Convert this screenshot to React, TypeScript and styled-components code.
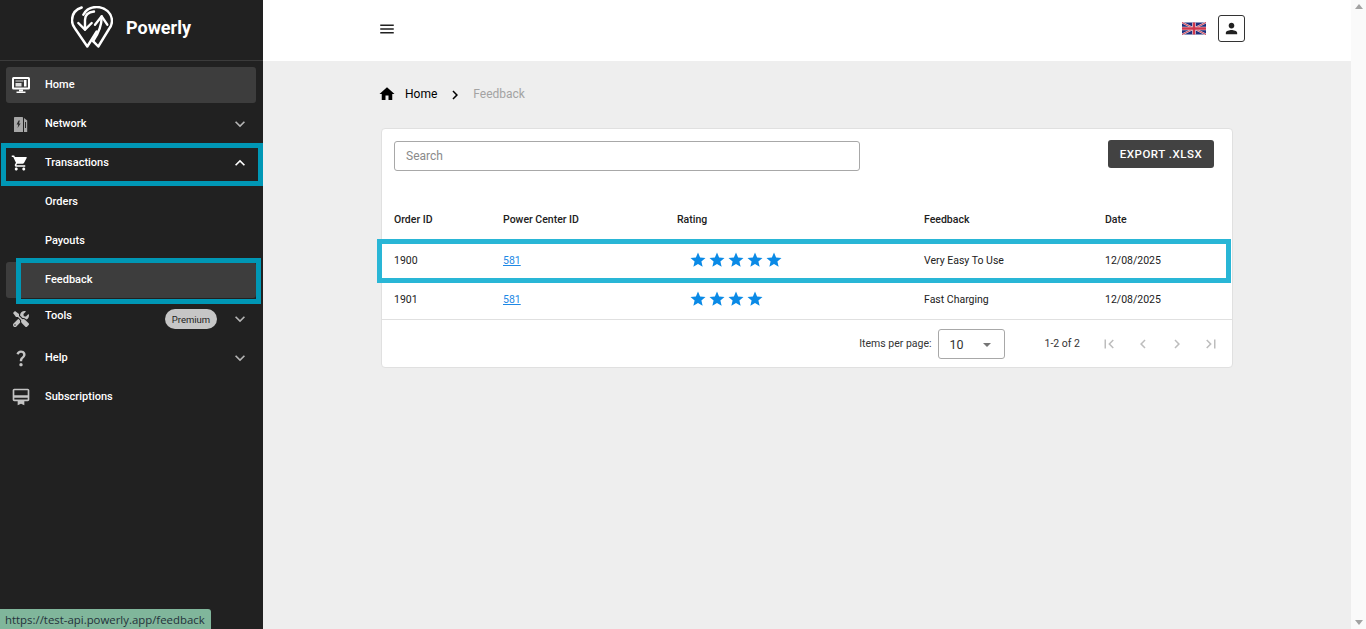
import { ReactNode } from "react";
import styled, { createGlobalStyle } from "styled-components";
import { FaTools } from "react-icons/fa";
import {
  MdCardMembership,
  MdChevronLeft,
  MdChevronRight,
  MdExpandLess,
  MdExpandMore,
  MdFirstPage,
  MdHome,
  MdLastPage,
  MdMenu,
  MdPerson,
  MdQuestionMark,
  MdShoppingCart,
  MdStar,
} from "react-icons/md";

const Global = createGlobalStyle`
  html, body {
    margin: 0;
    height: 100%;
    overflow: hidden;
    font-family: Roboto, "Liberation Sans", sans-serif;
  }
  * { box-sizing: border-box; }
`;

const Page = styled.div`
  width: 1366px;
  height: 629px;
  display: flex;
  position: relative;
  background: #eeeeee;
`;

const Sidebar = styled.aside`
  width: 263px;
  flex: none;
  background: #212121;
  color: #fff;
`;

const Brand = styled.div`
  height: 61px;
  display: flex;
  align-items: center;
  padding: 0 0 6px 71px;
  gap: 13px;
  border-bottom: 1px solid #3b3b3b;
  font-size: 18px;
  font-weight: 700;
`;

const Nav = styled.nav`
  padding: 6px 7px 0 6px;
  display: flex;
  flex-direction: column;
  gap: 3px;
`;

const NavItem = styled.div<{ $active?: boolean }>`
  position: relative;
  height: 36px;
  display: flex;
  align-items: center;
  border-radius: 3px;
  font-size: 11px;
  font-weight: 500;
  background: ${(p) => (p.$active ? "#3d3d3d" : "transparent")};
`;

const IconSlot = styled.span<{ $dim?: boolean }>`
  width: 39px;
  height: 20px;
  flex: none;
  display: flex;
  align-items: center;
  padding-left: 5px;
  font-size: 20px;
  color: ${(p) => (p.$dim ? "#c4c4c4" : "#fff")};
`;

const ToolsIcon = styled(FaTools)`
  margin-left: 2px;
  font-size: 16px;
`;

const NavLabel = styled.span<{ $raised?: boolean; $sub?: boolean }>`
  margin-left: ${(p) => (p.$sub ? "39px" : "0")};
  padding-bottom: ${(p) => (p.$raised ? "8px" : "2px")};
`;

const Badge = styled.span`
  margin-left: auto;
  width: 52px;
  height: 20px;
  border-radius: 10px;
  background: #c6c6c6;
  color: #222;
  font-size: 9.5px;
  font-weight: 400;
  display: flex;
  align-items: center;
  justify-content: center;
`;

const Chevron = styled.span<{ $dim?: boolean }>`
  margin-left: auto;
  margin-right: 6px;
  display: flex;
  font-size: 20px;
  color: ${(p) => (p.$dim ? "#b5b5b5" : "#fff")};
  ${Badge} + & {
    margin-left: 13px;
  }
`;

const Highlight = styled.div<{ $top: number; $bottom: number; $left: number; $right: number; $color: string }>`
  position: absolute;
  top: ${(p) => p.$top}px;
  bottom: ${(p) => p.$bottom}px;
  left: ${(p) => p.$left}px;
  right: ${(p) => p.$right}px;
  border: 5px solid ${(p) => p.$color};
  pointer-events: none;
`;

const Main = styled.main`
  flex: 1;
  min-width: 0;
`;

const TopBar = styled.header`
  height: 61px;
  background: #fff;
  display: flex;
  align-items: center;
  padding: 0 106px 4px 115px;
`;

const IconButton = styled.span`
  display: flex;
  font-size: 18px;
  color: #212121;
`;

const TopRight = styled.div`
  margin-left: auto;
  display: flex;
  align-items: center;
  gap: 12px;
`;

const UserButton = styled.span`
  width: 27px;
  height: 27px;
  border: 1px solid #333;
  border-radius: 3px;
  display: flex;
  align-items: center;
  justify-content: center;
  font-size: 17px;
  color: #212121;
`;

const Content = styled.div`
  padding: 22px 118px 0;
`;

const Crumbs = styled.div`
  height: 21px;
  display: flex;
  align-items: center;
  font-size: 12px;
  color: #000;
  margin-left: -3px;
  margin-bottom: 24px;
`;

const CrumbIcon = styled.span`
  display: flex;
  font-size: 18px;
  margin-right: 9px;
`;

const CrumbSep = styled.span`
  display: flex;
  font-size: 18px;
  margin: 3px 9px 0 9px;
`;

const CrumbCurrent = styled.span`
  color: #a3a3a3;
`;

const Card = styled.section`
  background: #fff;
  border: 1px solid #e0e0e0;
  border-radius: 4px;
  height: 240px;
`;

const Toolbar = styled.div`
  height: 71px;
  display: flex;
  align-items: flex-start;
  justify-content: space-between;
  padding: 12px 18px 0 12px;
`;

const Search = styled.input`
  width: 466px;
  height: 30px;
  border: 1px solid #a8a8a8;
  border-radius: 3px;
  padding: 0 11px;
  font: 400 12px Roboto, sans-serif;
  outline: none;
  &::placeholder {
    color: #8a8a8a;
    opacity: 1;
  }
`;

const ExportButton = styled.button`
  width: 106px;
  height: 28px;
  margin-top: -1px;
  border: 0;
  border-radius: 3px;
  background: #424242;
  color: #fff;
  font: 500 11.5px Roboto, sans-serif;
  letter-spacing: 0.5px;
  padding: 0;
`;

const Row = styled.div<{ $head?: boolean }>`
  position: relative;
  display: grid;
  grid-template-columns: 109px 174px 247px 181px 1fr;
  align-items: center;
  height: ${(p) => (p.$head ? "41px" : "39px")};
  padding: ${(p) => (p.$head ? "0 0 3px 12px" : "0 0 0 12px")};
  font-size: 10.5px;
  font-weight: ${(p) => (p.$head ? 500 : 400)};
  color: #212121;
`;

const IdLink = styled.a`
  color: #1e88e5;
  text-decoration: underline;
`;

const Stars = styled.span`
  display: flex;
  gap: 1px;
  padding: 0 0 2px 12px;
  font-size: 18px;
  color: #0a8ae6;
`;

const Footer = styled.div`
  height: 47px;
  border-top: 1px solid #e0e0e0;
  display: flex;
  align-items: center;
  justify-content: flex-end;
  padding-right: 12px;
  font-size: 10.5px;
  color: #333;
`;

const PerPage = styled.div`
  width: 67px;
  height: 30px;
  margin: 2px 40px 0 6px;
  border: 1px solid #a8a8a8;
  border-radius: 3px;
  display: flex;
  align-items: center;
  justify-content: space-between;
  padding: 0 13px 0 11px;
  font-size: 12.5px;
`;

const Caret = styled.span`
  width: 0;
  height: 0;
  border-left: 4px solid transparent;
  border-right: 4px solid transparent;
  border-top: 4px solid #757575;
  margin-top: 2px;
`;

const PageButtons = styled.div`
  display: flex;
  margin: 2px 0 0 20px;
  gap: 16px;
  font-size: 18px;
  color: #bdbdbd;
  span {
    display: flex;
  }
`;

const Scrollbar = styled.div`
  width: 15px;
  flex: none;
  background: #fafafa;
  display: flex;
  flex-direction: column;
  justify-content: space-between;
  align-items: center;
  padding: 4px 0;
`;

const ScrollArrow = styled.span<{ $down?: boolean }>`
  width: 0;
  height: 0;
  border-left: 4.5px solid transparent;
  border-right: 4.5px solid transparent;
  ${(p) => (p.$down ? "border-top" : "border-bottom")}: 5px solid #a3a3a3;
`;

const StatusBubble = styled.div`
  position: absolute;
  left: 0;
  bottom: 0;
  width: 211px;
  height: 20px;
  padding-left: 5px;
  background: #80b69b;
  border-top-right-radius: 3px;
  color: #24323a;
  font: 11.4px/21px "Open Sans", "Noto Sans", sans-serif;
  white-space: nowrap;
`;

const Logo = () => (
  <svg width="42" height="42" viewBox="0 0 42 42" fill="none" stroke="#fff" strokeWidth="2.4" strokeLinecap="round" strokeLinejoin="round">
    <path d="M10.7 1.5C4.5 3.5 1 8.5 1 14.5c0 3.2 1.2 5.6 3 8L16.3 40.5 25.7 25.5" />
    <path d="M12.3 8.7C15 3.5 20 1 25.7 1 34.5 1 41 7.5 41 15c0 3-1.2 5.6-3 8L27.3 40.5 22.3 35.3" />
    <path d="M14 23.5V14c0-5.5 4-8 9-8.5" />
    <path d="M7.3 17 14 23.7 20.7 17" />
    <path d="M30.7 10.5c0 9-2.5 16-8.5 24.5" />
    <path d="M24 18.7 30.7 10.3 36.3 18.7" />
  </svg>
);

const MonitorIcon = () => (
  <svg width="20" height="20" viewBox="0 0 20 20">
    <rect x="1" y="2" width="18" height="12.5" rx="1.5" fill="#fff" />
    <rect x="3" y="4" width="14" height="8.5" fill="#3a3a3a" />
    <rect x="4.5" y="8" width="6" height="3.5" fill="#ddd" />
    <rect x="4.5" y="5" width="8" height="2" fill="#8a8a8a" />
    <rect x="13" y="5" width="2.5" height="6.5" fill="#fff" />
    <rect x="8" y="14.5" width="4" height="2" fill="#fff" />
    <rect x="5.5" y="16.5" width="9" height="1.5" fill="#fff" />
  </svg>
);

const StationIcon = () => (
  <svg width="20" height="20" viewBox="0 0 20 20">
    <path d="M3 4c0-.6.4-1 1-1h7c.6 0 1 .4 1 1v14H3z" fill="#a6a6a6" />
    <path d="M7.6 6.5 5.6 10.5h1.7L6.6 14l3-4.6H7.9L8.9 6.5z" fill="#2a2a2a" />
    <path d="M13 4l3.2 2.6V18H13z" fill="#a6a6a6" />
    <rect x="14" y="8" width="1" height="6" fill="#2a2a2a" />
  </svg>
);

const UkFlag = () => (
  <svg width="24" height="13" viewBox="0 0 60 30">
    <rect width="60" height="30" fill="#1f2f7d" />
    <path d="M0 0l60 30M60 0L0 30" stroke="#e9e4ea" strokeWidth="5" />
    <path d="M0 0l60 30M60 0L0 30" stroke="#d0384d" strokeWidth="2.5" />
    <path d="M30 0v30M0 15h60" stroke="#e9e4ea" strokeWidth="9" />
    <path d="M30 0v30M0 15h60" stroke="#d0384d" strokeWidth="6" />
  </svg>
);

const Item = ({
  icon,
  dim,
  label,
  raised,
  chevron,
  active,
  badge,
  children,
}: {
  icon?: ReactNode;
  dim?: boolean;
  label: string;
  raised?: boolean;
  chevron?: "up" | "down";
  active?: boolean;
  badge?: string;
  children?: ReactNode;
}) => (
  <NavItem $active={active}>
    {icon && <IconSlot $dim={dim}>{icon}</IconSlot>}
    <NavLabel $raised={raised} $sub={!icon}>
      {label}
    </NavLabel>
    {badge && <Badge>{badge}</Badge>}
    {chevron && (
      <Chevron $dim={chevron === "down"}>
        {chevron === "up" ? <MdExpandLess /> : <MdExpandMore />}
      </Chevron>
    )}
    {children}
  </NavItem>
);

const rows = [
  { id: "1900", center: "581", rating: 5, feedback: "Very Easy To Use", date: "12/08/2025" },
  { id: "1901", center: "581", rating: 4, feedback: "Fast Charging", date: "12/08/2025" },
];

export default function App() {
  return (
    <Page>
      <Global />
      <Sidebar>
        <Brand>
          <Logo />
          Powerly
        </Brand>
        <Nav>
          <Item icon={<MonitorIcon />} label="Home" active />
          <Item icon={<StationIcon />} label="Network" chevron="down" />
          <Item icon={<MdShoppingCart size={18} />} label="Transactions" chevron="up">
            <Highlight $top={-2} $bottom={-5} $left={-5} $right={-7} $color="#0097b5" />
          </Item>
          <Item label="Orders" />
          <Item label="Payouts" />
          <Item label="Feedback" active>
            <Highlight $top={-4} $bottom={-6} $left={10} $right={-5} $color="#0097b5" />
          </Item>
          <Item icon={<ToolsIcon />} dim label="Tools" raised badge="Premium" chevron="down" />
          <Item icon={<MdQuestionMark />} dim label="Help" chevron="down" />
          <Item icon={<MdCardMembership />} dim label="Subscriptions" />
        </Nav>
      </Sidebar>
      <Main>
        <TopBar>
          <IconButton>
            <MdMenu />
          </IconButton>
          <TopRight>
            <UkFlag />
            <UserButton>
              <MdPerson />
            </UserButton>
          </TopRight>
        </TopBar>
        <Content>
          <Crumbs>
            <CrumbIcon>
              <MdHome />
            </CrumbIcon>
            Home
            <CrumbSep>
              <MdChevronRight />
            </CrumbSep>
            <CrumbCurrent>Feedback</CrumbCurrent>
          </Crumbs>
          <Card>
            <Toolbar>
              <Search placeholder="Search" />
              <ExportButton>EXPORT .XLSX</ExportButton>
            </Toolbar>
            <Row $head>
              <span>Order ID</span>
              <span>Power Center ID</span>
              <span>Rating</span>
              <span>Feedback</span>
              <span>Date</span>
            </Row>
            {rows.map((r, i) => (
              <Row key={r.id}>
                <span>{r.id}</span>
                <span>
                  <IdLink>{r.center}</IdLink>
                </span>
                <Stars>
                  {Array.from({ length: r.rating }, (_, n) => (
                    <MdStar key={n} />
                  ))}
                </Stars>
                <span>{r.feedback}</span>
                <span>{r.date}</span>
                {i === 0 && <Highlight $top={-2} $bottom={-3} $left={-5} $right={1} $color="#29b6d6" />}
              </Row>
            ))}
            <Footer>
              Items per page:
              <PerPage>
                10
                <Caret />
              </PerPage>
              1-2 of 2
              <PageButtons>
                <span>
                  <MdFirstPage />
                </span>
                <span>
                  <MdChevronLeft />
                </span>
                <span>
                  <MdChevronRight />
                </span>
                <span>
                  <MdLastPage />
                </span>
              </PageButtons>
            </Footer>
          </Card>
        </Content>
      </Main>
      <Scrollbar>
        <ScrollArrow />
        <ScrollArrow $down />
      </Scrollbar>
      <StatusBubble>https://test-api.powerly.app/feedback</StatusBubble>
    </Page>
  );
}
